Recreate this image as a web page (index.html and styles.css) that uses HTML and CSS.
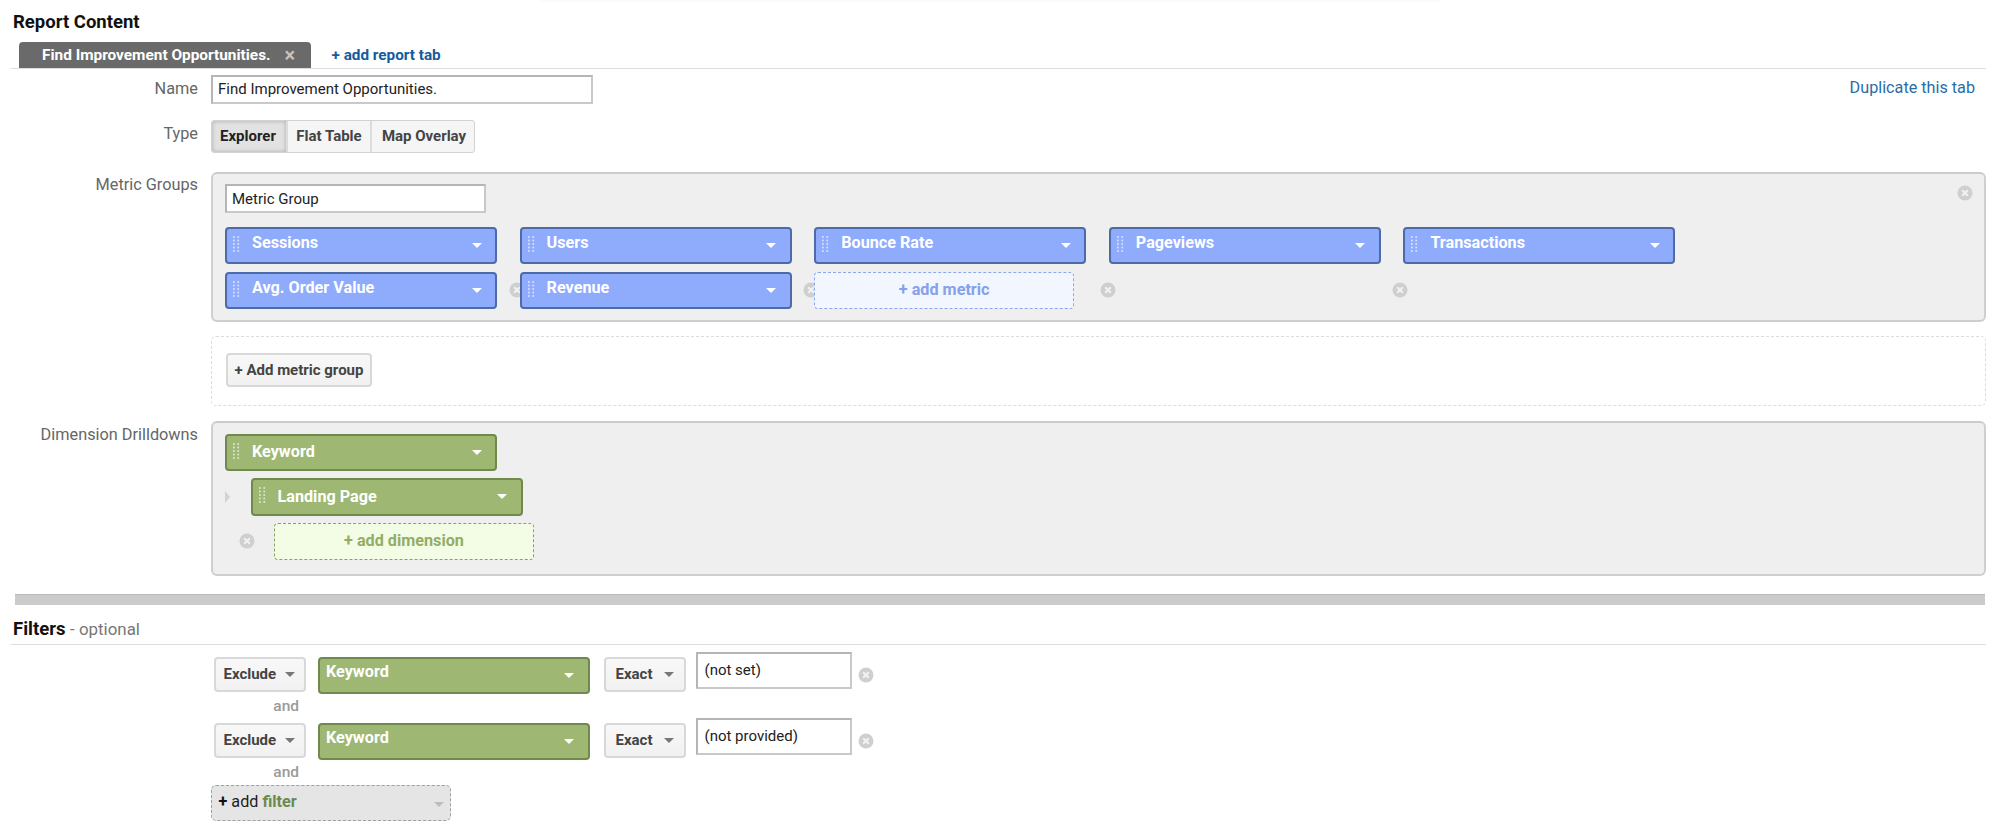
FILE: index.html
```html
<!DOCTYPE html>
<html lang="en">
<head>
<meta charset="utf-8">
<title>Report Content</title>
<link rel="stylesheet" href="styles.css">
</head>
<body>
<svg class="defs" width="0" height="0" aria-hidden="true">
  <symbol id="x" viewBox="0 0 16 16">
    <circle cx="8" cy="8" r="7.5" fill="#cfcfcf"/>
    <path d="M5.2 5.2l5.6 5.6M10.8 5.2l-5.6 5.6" stroke="#f2f2f2" stroke-width="2" fill="none"/>
  </symbol>
  <symbol id="grip" viewBox="0 0 8 18">
    <g fill="#fff" fill-opacity=".65">
      <rect x="0" y="0" width="2" height="2"/><rect x="5" y="0" width="2" height="2"/>
      <rect x="0" y="4" width="2" height="2"/><rect x="5" y="4" width="2" height="2"/>
      <rect x="0" y="8" width="2" height="2"/><rect x="5" y="8" width="2" height="2"/>
      <rect x="0" y="12" width="2" height="2"/><rect x="5" y="12" width="2" height="2"/>
      <rect x="0" y="16" width="2" height="2"/><rect x="5" y="16" width="2" height="2"/>
    </g>
  </symbol>
</svg>
<main class="page">
  <h2 class="title">Report Content</h2>
  <div class="tabs">
    <div class="tab"><span>Find Improvement Opportunities.</span><span class="tab-x">×</span></div>
    <a class="add-tab">+ add report tab</a>
  </div>

  <div class="row row-name">
    <div class="label">Name</div>
    <div class="name-line">
      <div class="input name-input">Find Improvement Opportunities.</div>
      <a class="dup">Duplicate this tab</a>
    </div>
  </div>

  <div class="row row-type">
    <div class="label">Type</div>
    <div class="seg">
      <div class="seg-btn seg-on">Explorer</div>
      <div class="seg-btn seg-flat">Flat Table</div>
      <div class="seg-btn seg-map">Map Overlay</div>
    </div>
  </div>

  <div class="row row-metrics">
    <div class="label">Metric Groups</div>
    <div class="box metric-box">
      <svg class="x box-x"><use href="#x"/></svg>
      <div class="input group-input">Metric Group</div>
      <div class="metric-grid">
        <div class="cell"><div class="pill blue"><svg class="grip"><use href="#grip"/></svg><span class="pill-text">Sessions</span><i class="arrow"></i></div></div>
        <div class="cell"><div class="pill blue"><svg class="grip"><use href="#grip"/></svg><span class="pill-text">Users</span><i class="arrow"></i></div></div>
        <div class="cell"><div class="pill blue"><svg class="grip"><use href="#grip"/></svg><span class="pill-text">Bounce Rate</span><i class="arrow"></i></div></div>
        <div class="cell"><div class="pill blue"><svg class="grip"><use href="#grip"/></svg><span class="pill-text">Pageviews</span><i class="arrow"></i></div></div>
        <div class="cell"><div class="pill blue"><svg class="grip"><use href="#grip"/></svg><span class="pill-text">Transactions</span><i class="arrow"></i></div></div>
        <div class="cell"><div class="pill blue"><svg class="grip"><use href="#grip"/></svg><span class="pill-text">Avg. Order Value</span><i class="arrow"></i></div><svg class="x cell-x"><use href="#x"/></svg></div>
        <div class="cell"><div class="pill blue"><svg class="grip"><use href="#grip"/></svg><span class="pill-text">Revenue</span><i class="arrow"></i></div><svg class="x cell-x"><use href="#x"/></svg></div>
        <div class="cell"><div class="add add-metric">+ add metric</div><svg class="x cell-x"><use href="#x"/></svg></div>
        <div class="cell"><svg class="x cell-x"><use href="#x"/></svg></div>
      </div>
    </div>
  </div>

  <div class="row row-addgroup">
    <div class="label"></div>
    <div class="dash-box"><div class="btn add-group">+ Add metric group</div></div>
  </div>

  <div class="row row-dims">
    <div class="label">Dimension Drilldowns</div>
    <div class="box dim-box">
      <div class="pill green"><svg class="grip"><use href="#grip"/></svg><span class="pill-text">Keyword</span><i class="arrow"></i></div>
      <div class="dim-line dim-second">
        <i class="chev"></i>
        <div class="pill green"><svg class="grip"><use href="#grip"/></svg><span class="pill-text">Landing Page</span><i class="arrow"></i></div>
      </div>
      <div class="dim-line dim-third">
        <svg class="x"><use href="#x"/></svg>
        <div class="add add-dim">+ add dimension</div>
      </div>
    </div>
  </div>

  <div class="divider"></div>

  <h2 class="title filters-title">Filters <span class="optional">- optional</span></h2>

  <div class="filters">
    <div class="filter">
      <div class="btn sel sel-mode">Exclude<i class="arrow-gray"></i></div>
      <div class="pill green fpill"><span class="pill-text">Keyword</span><i class="arrow"></i></div>
      <div class="btn sel sel-match">Exact<i class="arrow-gray"></i></div>
      <div class="input val-input">(not set)</div>
      <svg class="x"><use href="#x"/></svg>
    </div>
    <div class="and">and</div>
    <div class="filter">
      <div class="btn sel sel-mode">Exclude<i class="arrow-gray"></i></div>
      <div class="pill green fpill"><span class="pill-text">Keyword</span><i class="arrow"></i></div>
      <div class="btn sel sel-match">Exact<i class="arrow-gray"></i></div>
      <div class="input val-input">(not provided)</div>
      <svg class="x"><use href="#x"/></svg>
    </div>
    <div class="and">and</div>
    <div class="add-filter"><span>+</span>&nbsp;add <b>filter</b><i class="arrow-gray arrow-end"></i></div>
  </div>
</main>
</body>
</html>
```
FILE: styles.css
```css
* { box-sizing: border-box; }
html, body { margin: 0; padding: 0; background: #fff; }
body { font-family: Roboto, "Noto Sans", sans-serif; color: #333; height: 838px; overflow: hidden; }
.defs { position: absolute; }
.page { padding: 12px 13px 0 11px; }
.page::before { content: ""; position: absolute; left: 540px; top: 0; width: 900px; height: 3px; background: linear-gradient(#fafafa, #fff); }

.title { margin: 0; font-size: 18.5px; line-height: 20px; font-weight: 700; color: #111; padding-left: 2px; height: 29.5px; }

.tabs { display: flex; align-items: stretch; height: 27px; padding-left: 7.5px; border-bottom: 1px solid #ddd; }
.tab { width: 292.5px; background: #6a6a6a; color: #fff; font-weight: 700; font-size: 15.4px; display: flex; align-items: center; padding-left: 23.5px; border-radius: 4px 4px 0 0; }
.tab-x { margin-left: 14px; color: #c4c4c4; font-size: 20px; line-height: 20px; }
.add-tab { margin-left: 20.5px; color: #145c9e; font-weight: 700; font-size: 15.3px; line-height: 26px; }

.row { display: grid; grid-template-columns: 187px 1fr; column-gap: 13px; }
.label { text-align: right; font-size: 16.3px; line-height: 20px; color: #666; }
.input { background: #fff; border: 2px solid #c9c9c9; border-top-color: #b5b5b5; border-left-color: #b5b5b5; color: #222; font-size: 15px; padding-left: 5px; }

.row-name { margin-top: 6px; }
.row-name .label { padding-top: 4px; }
.name-line { display: flex; justify-content: space-between; align-items: flex-start; }
.name-input { width: 382px; height: 29px; line-height: 25px; }
.dup { color: #2a6da8; font-size: 16.2px; line-height: 20px; margin-top: 3px; margin-right: 11px; }

.row-type { margin-top: 16px; }
.row-type .label { padding-top: 4px; }
.seg { display: flex; height: 33px; width: 264px; border: 1px solid #d2d2d2; border-radius: 3px; background: #f5f5f5; }
.seg-btn { font-weight: 700; font-size: 15px; line-height: 31px; text-align: center; color: #444; border-right: 2px solid #dcdcdc; }
.seg-on { width: 76px; padding-right: 2px; background: #e2e2e2; box-shadow: inset 0 0 4px #aaa; color: #222; border-radius: 3px 0 0 3px; }
.seg-flat { width: 84px; }
.seg-map { flex: 1; padding-left: 2px; border-right: 0; }

.box { background: #efefef; border: 2px solid #cfcfcf; border-top-color: #cbcbcb; border-radius: 6px; position: relative; }
.row-metrics { margin-top: 19px; }
.row-metrics .label { padding-top: 3px; }
.metric-box { height: 150px; padding: 10px 12px; }
.box-x { position: absolute; top: 11px; right: 11px; }
.x { width: 16px; height: 16px; flex: none; }
.group-input { width: 261px; height: 29px; line-height: 26px; }
.metric-grid { display: grid; grid-template-columns: repeat(5, 272px); column-gap: 22.6px; row-gap: 7.5px; margin-top: 14px; }
.cell { position: relative; min-height: 37.5px; }
.cell-x { position: absolute; left: calc(100% + 11.5px); top: 10px; }
.add + .cell-x { left: calc(100% + 13.5px); }
.pill { position: relative; z-index: 1; width: 272px; height: 37.5px; display: flex; align-items: center; border-radius: 4px; border: 2px solid; padding-left: 6px; color: #fff; font-weight: 700; font-size: 16.2px; }
.pill.blue { background: #8fabfc; border-color: #4e6ba9; }
.pill.green { background: #9eb873; border-color: #6f8a4c; }
.grip { width: 7px; height: 18px; flex: none; margin-top: -3px; }
.pill-text { margin-left: 12px; padding-bottom: 5px; }
.green .pill-text { padding-bottom: 1px; }
.arrow { margin-left: auto; margin-right: 13.5px; width: 0; height: 0; border: 5px solid transparent; border-top: 5.5px solid #fff; border-bottom: 0; }
.add { display: flex; align-items: center; justify-content: center; height: 37.5px; width: 260px; padding-bottom: 1px; font-weight: 700; font-size: 16.2px; border-radius: 4px; position: relative; z-index: 1; }
.add-metric { background: #f2f6fe; border: 1px dashed #8ba6f0; color: #86a0ea; }

.row-addgroup { margin-top: 14px; }
.dash-box { height: 70px; border: 1px dashed #dcdcdc; border-radius: 5px; padding: 16.5px 14px; }
.btn { background: linear-gradient(#f8f8f8, #f1f1f1); border: 2px solid #d8d8d8; border-radius: 4px; color: #444; font-weight: 700; font-size: 15px; }
.add-group { width: 146px; height: 34px; line-height: 30px; text-align: center; }

.row-dims { margin-top: 15px; }
.row-dims .label { padding-top: 4px; }
.dim-box { height: 155px; padding: 11px 12px; }
.dim-line { display: flex; align-items: center; }
.dim-second { margin-top: 7px; }
.chev { width: 0; height: 0; border-left: 5px solid #d2d2d2; border-top: 6px solid transparent; border-bottom: 6px solid transparent; margin-right: 20.5px; }
.dim-third { margin-top: 7px; padding-left: 14px; }
.add-dim { margin-left: 19px; background: #f3fde6; border: 1px dashed #8aa35c; color: #93ad66; }

.divider { height: 11px; margin-top: 18px; margin-left: 4px; margin-right: 1px; background: #cbcbcb; border-top: 1px solid #b9b9b9; }

.filters-title { height: 27px; margin-top: 13px; border-bottom: 1px solid #ddd; line-height: 22px; }
.optional { font-weight: 400; font-size: 16.9px; color: #777; }

.filters { margin-left: 199.5px; padding-top: 8px; }
.filter { display: flex; align-items: flex-start; padding-left: 3px; height: 37px; }
.filter .x { margin: 14px 0 0 6px; }
.sel { height: 35px; margin-top: 4px; line-height: 31px; position: relative; padding-left: 8px; }
.sel-mode { width: 92px; }
.sel-match { width: 82.5px; margin-left: 14px; padding-left: 10px; }
.sel-mode .arrow-gray { right: 9px; }
.sel-match .arrow-gray { right: 10px; }
.fpill { width: 272px; margin-left: 12px; margin-top: 4px; padding-left: 0; }
.fpill .pill-text { margin-left: 6.5px; padding-bottom: 7px; }
.fpill .arrow { margin-right: 14px; }
.val-input { width: 156px; height: 37px; margin-left: 9.5px; margin-top: -1px; line-height: 32px; padding-left: 7px; }
.and { height: 29px; line-height: 33px; width: 88.5px; text-align: right; font-size: 15.5px; font-weight: 500; color: #9a9a9a; }
.and:last-of-type { height: 23px; line-height: 31px; }
.arrow-gray { position: absolute; right: 8px; top: 13px; width: 0; height: 0; border: 5px solid transparent; border-top: 5px solid #777; border-bottom: 0; }
.add-filter { position: relative; width: 240.5px; height: 36px; background: #e5e5e5; border: 1px dashed #9f9f9f; border-radius: 5px; padding-left: 7px; font-size: 16.2px; line-height: 32px; color: #222; }
.add-filter span { font-weight: 700; color: #111; }
.add-filter b { color: #6b8a50; font-weight: 700; }
.arrow-end { top: 16px; right: 6px; border-top-color: #bdbdbd; }
```
